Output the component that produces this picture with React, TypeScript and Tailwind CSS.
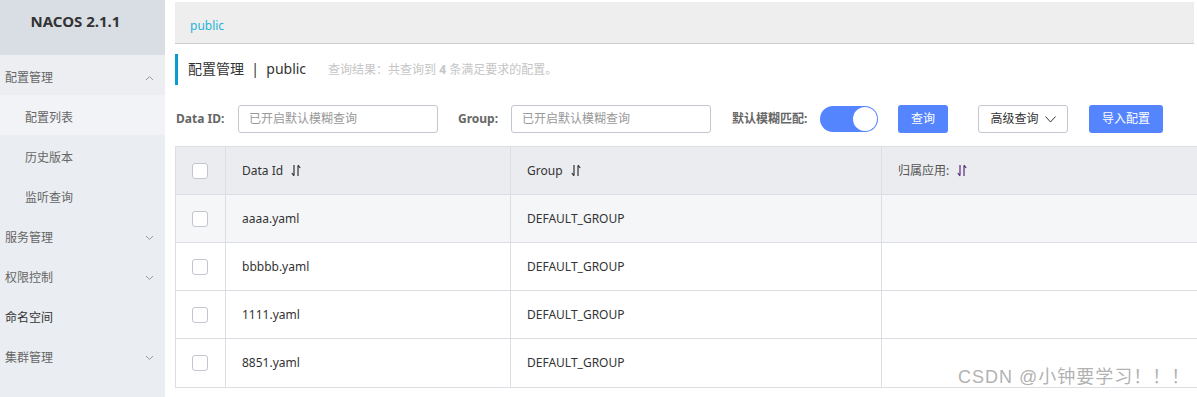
import React from 'react';

const menu = [
  { label: '配置管理', chevron: 'up', sub: false },
  { label: '配置列表', sub: true, active: true },
  { label: '历史版本', sub: true },
  { label: '监听查询', sub: true },
  { label: '服务管理', chevron: 'down', sub: false },
  { label: '权限控制', chevron: 'down', sub: false },
  { label: '命名空间', sub: false, dark: true },
  { label: '集群管理', chevron: 'down', sub: false },
];

const rows = [
  { id: 'aaaa.yaml', group: 'DEFAULT_GROUP', hover: true },
  { id: 'bbbbb.yaml', group: 'DEFAULT_GROUP' },
  { id: '1111.yaml', group: 'DEFAULT_GROUP' },
  { id: '8851.yaml', group: 'DEFAULT_GROUP' },
];

const Chevron = ({ dir }: { dir: 'up' | 'down' }) => (
  <svg width="9" height="6" viewBox="0 0 9 6" className="text-[#999]">
    <path
      d={dir === 'up' ? 'M1 5 L4.5 1.5 L8 5' : 'M1 1 L4.5 4.5 L8 1'}
      fill="none"
      stroke="currentColor"
      strokeWidth="1"
    />
  </svg>
);

const SortIcon = ({ color = '#333' }: { color?: string }) => (
  <svg width="10" height="13" viewBox="0 0 10 13" className="ml-2">
    <path d="M3 1 V11.5 M0.8 9 L3 11.8" fill="none" stroke={color} strokeWidth="1.2" />
    <path d="M7 12 V1.5 M7 1.2 L9.2 4" fill="none" stroke={color} strokeWidth="1.2" />
  </svg>
);

const Checkbox = () => (
  <div className="h-4 w-4 rounded-[3px] border border-[#c4c6cf] bg-white" />
);

const App = () => {
  return (
    <div className="relative flex h-[397px] w-[1197px] overflow-hidden bg-white font-['Noto_Sans','Noto_Sans_CJK_SC',sans-serif] text-xs">
      {/* 사이드바 */}
      <div className="flex w-[165px] shrink-0 flex-col bg-[#eaedf1]">
        <div className="flex h-[55px] shrink-0 justify-center bg-[#d9dde4] pr-[14px] pt-[11px] text-[15px] font-bold text-[#333]">
          NACOS 2.1.1
        </div>
        {menu.map((m) => (
          <div
            key={m.label}
            className={`flex h-10 shrink-0 items-center justify-between pr-[11px] pt-[6px] ${
              m.sub ? 'pl-[25px]' : 'pl-[5px]'
            } ${m.active ? 'bg-[#f2f3f7]' : m.label === '配置管理' ? 'bg-[#eceef2]' : ''} ${
              m.dark ? 'text-[#333]' : 'text-[#666]'
            }`}
          >
            <span className="text-[12px]">{m.label}</span>
            {m.chevron && <Chevron dir={m.chevron as 'up' | 'down'} />}
          </div>
        ))}
      </div>

      {/* 메인 */}
      <div className="flex min-w-0 flex-1 flex-col pl-[10px] pt-[2px]">
        <div className="flex h-[42px] w-[1019px] shrink-0 items-center border-b border-[#cccccc] bg-[#eeeeee] pl-[15px] pt-[6px] text-[12px] text-[#1fb4d8]">
          public
        </div>

        <div className="mt-[10px] flex h-[31px] items-center border-l-[3px] border-[#0a9bd2] pl-[10px]">
          <span className="text-[14px] text-[#333]">配置管理&nbsp;&nbsp;|&nbsp;&nbsp;public</span>
          <span className="ml-[22px] text-[12px] text-[#c5c5c5]">
            查询结果：共查询到 <b className="font-bold">4</b> 条满足要求的配置。
          </span>
        </div>

        {/* 검색 영역 */}
        <div className="mt-[20px] flex h-[28px] items-center">
          <span className="ml-[1px] w-[62px] text-[12px] font-bold text-[#666]">Data ID:</span>
          <div className="flex h-[28px] w-[200px] items-center rounded-[3px] border border-[#c4c6cf] pl-[10px] text-[12px] text-[#999]">
            已开启默认模糊查询
          </div>
          <span className="ml-[20px] w-[53px] text-[12px] font-bold text-[#666]">Group:</span>
          <div className="flex h-[28px] w-[200px] items-center rounded-[3px] border border-[#c4c6cf] pl-[10px] text-[12px] text-[#999]">
            已开启默认模糊查询
          </div>
          <span className="ml-[21px] w-[88px] text-[12px] font-bold text-[#666]">默认模糊匹配:</span>
          <div className="flex h-[26px] w-[58px] items-center justify-end rounded-full bg-[#5584ff] pr-[1px]">
            <div className="h-[24px] w-[24px] rounded-full bg-white" />
          </div>
          <button className="ml-[20px] flex h-[28px] w-[50px] items-center justify-center rounded-[3px] bg-[#5584ff] text-[12px] text-white">
            查询
          </button>
          <button className="ml-[30px] flex h-[28px] w-[90px] items-center justify-center gap-x-[6px] rounded-[3px] border border-[#c4c6cf] bg-white text-[12px] text-[#333]">
            高级查询
            <svg width="11" height="7" viewBox="0 0 11 7">
              <path d="M0.5 0.5 L5.5 6 L10.5 0.5" fill="none" stroke="#333" strokeWidth="1" />
            </svg>
          </button>
          <button className="ml-[21px] flex h-[28px] w-[74px] items-center justify-center rounded-[3px] bg-[#5584ff] text-[12px] text-white">
            导入配置
          </button>
        </div>

        {/* 테이블 */}
        <div className="mt-[13px] w-[1030px] border border-[#dcdee3] text-[12px] text-[#333]">
          <div className="flex h-[48px] border-b border-[#dcdee3] bg-[#ebecf0]">
            <div className="flex w-[50px] items-center border-r border-[#dcdee3] pl-[16px]">
              <Checkbox />
            </div>
            <div className="flex w-[285px] items-center border-r border-[#dcdee3] pl-[16px]">
              Data Id <SortIcon />
            </div>
            <div className="flex w-[371px] items-center border-r border-[#dcdee3] pl-[16px]">
              Group <SortIcon />
            </div>
            <div className="flex flex-1 items-center pl-[16px] text-[#555]">
              归属应用: <SortIcon color="#5b2a7a" />
            </div>
          </div>
          {rows.map((r, i) => (
            <div
              key={r.id}
              className={`flex h-[48px] ${i < rows.length - 1 ? 'border-b border-[#dcdee3]' : ''} ${
                r.hover ? 'bg-[#f5f6f8]' : 'bg-white'
              }`}
            >
              <div className="flex w-[50px] items-center border-r border-[#dcdee3] pl-[16px]">
                <Checkbox />
              </div>
              <div className="flex w-[285px] items-center border-r border-[#dcdee3] pl-[16px]">{r.id}</div>
              <div className="flex w-[371px] items-center border-r border-[#dcdee3] pl-[16px]">{r.group}</div>
              <div className="flex-1" />
            </div>
          ))}
        </div>
      </div>

      {/* 워터마크 */}
      <div className="absolute left-[958px] top-[365px] whitespace-nowrap font-['Liberation_Sans','Noto_Sans_CJK_SC',sans-serif] text-[18px] tracking-[1px] text-[#a8a8a8]/90">
        CSDN @小钟要学习！！！
      </div>
    </div>
  );
};

export default App;
